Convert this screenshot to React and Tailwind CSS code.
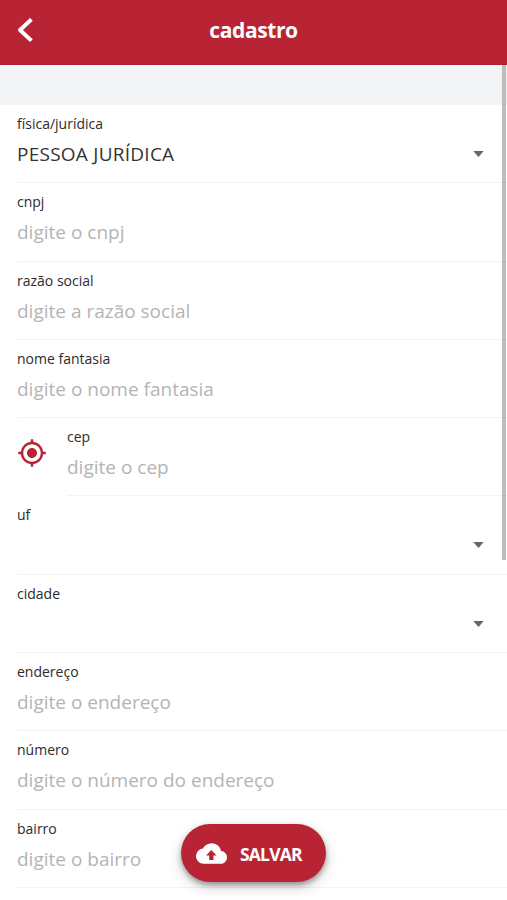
import { MdMyLocation } from 'react-icons/md';

const fields = [
  { label: 'física/jurídica', value: 'PESSOA JURÍDICA', select: true },
  { label: 'cnpj', placeholder: 'digite o cnpj' },
  { label: 'razão social', placeholder: 'digite a razão social' },
  { label: 'nome fantasia', placeholder: 'digite o nome fantasia' },
  { label: 'cep', placeholder: 'digite o cep', locate: true },
  { label: 'uf', select: true },
  { label: 'cidade', select: true },
  { label: 'endereço', placeholder: 'digite o endereço' },
  { label: 'número', placeholder: 'digite o número do endereço' },
  { label: 'bairro', placeholder: 'digite o bairro' },
];

const Header = () => (
  <header className="grid h-[65px] shrink-0 grid-cols-[60px_1fr_60px] items-center border-b border-[#a92335] bg-[#b92435] text-white">
    <button aria-label="voltar" className="pt-[4px] pb-[8px] pl-[16px]">
      <svg width="18" height="26" viewBox="0 0 18 26" fill="none" stroke="currentColor" strokeWidth="4">
        <path d="M15.4 2.4 4 13l11.4 10.6" strokeLinejoin="round" />
      </svg>
    </button>
    <h1 className="pb-[5px] text-center text-[21px] leading-[28px] font-bold tracking-[-0.4px]">cadastro</h1>
  </header>
);

const Field = ({ label, value, placeholder, select, locate }) => (
  <div className="flex h-[78.3px] pl-[17px]">
    {locate && (
      <div className="w-[50px] shrink-0 pt-[20px]">
        <MdMyLocation className="size-[30px] text-[#b92435]" />
      </div>
    )}
    <div className="flex grow items-start border-b border-[#f3f3f3]">
      <div className="grow pt-[9px]">
        <div className="h-[20px] text-[14px] leading-[20px] text-[#2b2b2b]">{label}</div>
        <div
          className={`mt-[6px] h-[28px] text-[19px] leading-[28px] ${
            value ? 'tracking-[0.25px] text-[#333333]' : 'text-[#b4b4b4]'
          }`}
        >
          {value || placeholder}
        </div>
      </div>
      {select && (
        <svg className="mt-[46px] mr-[23px]" width="11" height="6" viewBox="0 0 11 6" fill="#666666">
          <path d="M0.3 0h10.4L5.5 6z" />
        </svg>
      )}
    </div>
  </div>
);

const SaveButton = () => (
  <button className="absolute top-[824px] left-[181px] flex h-[58px] w-[145px] items-center rounded-full bg-[#b92435] pl-[15px] text-white shadow-[0_3px_5px_rgba(0,0,0,0.3),0_5px_14px_rgba(0,0,0,0.2)]">
    <svg width="31" height="21" viewBox="0 4 24 16" fill="currentColor">
      <path
        fillRule="evenodd"
        d="M19.35 10.04A7.49 7.49 0 0 0 12 4C9.11 4 6.6 5.64 5.35 8.04A5.994 5.994 0 0 0 0 14c0 3.31 2.69 6 6 6h13c2.76 0 5-2.24 5-5 0-2.64-2.05-4.78-4.65-4.96zM13.5 13.5V17h-3.3v-3.5H7.8l4.05-4.2 4.05 4.2z"
      />
    </svg>
    <span className="mt-[2px] ml-[13px] text-[17.5px] leading-[24px] font-bold tracking-[-0.8px]">SALVAR</span>
  </button>
);

export default function App() {
  return (
    <div className="relative flex h-[900px] w-[507px] flex-col overflow-hidden bg-white font-['Open_Sans','Noto_Sans',sans-serif]">
      <Header />
      <div className="h-[40px] shrink-0 bg-[#f3f4f6]" />
      <main>
        {fields.map((field) => (
          <Field key={field.label} {...field} />
        ))}
      </main>
      {/* scroll thumb */}
      <div className="absolute top-[65px] right-[1px] h-[495px] w-[4px] bg-[#bcbcbc]" />
      <SaveButton />
    </div>
  );
}
